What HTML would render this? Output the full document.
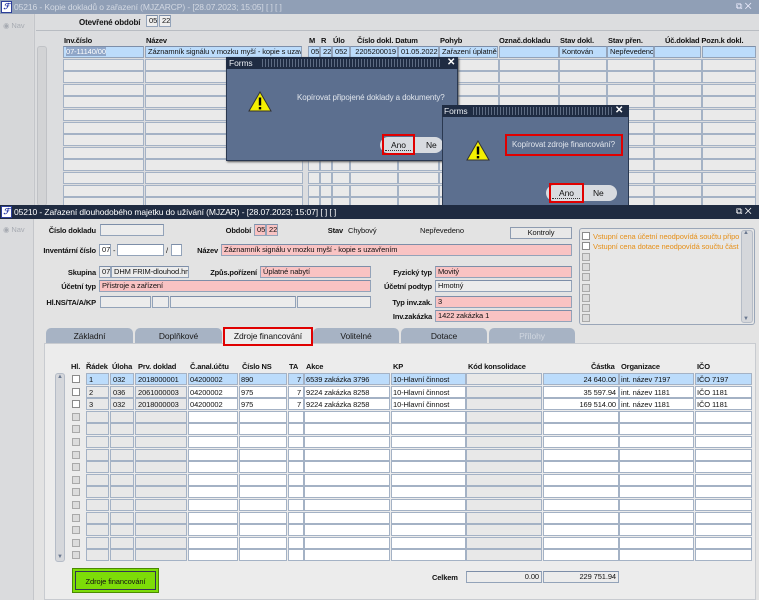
<!DOCTYPE html>
<html><head><meta charset="utf-8">
<style>
*{box-sizing:border-box;margin:0;padding:0}
body{width:759px;height:600px;overflow:hidden;position:relative;background:#d8d9db;font-family:"Liberation Sans",Arial,sans-serif;font-size:7.5px;color:#111;letter-spacing:-0.1px}
.a{position:absolute}
.lb{position:absolute;font-weight:bold;font-size:7.5px;white-space:nowrap;letter-spacing:-0.15px}
.lr{position:absolute;font-weight:bold;font-size:7.5px;white-space:nowrap;text-align:right;width:100px;letter-spacing:-0.15px}
.f{position:absolute;height:12px;border:1px solid #93a3b9;border-top-color:#7d8ea8;background:#ececec;font-size:7.5px;line-height:10px;padding-left:2px;white-space:nowrap;overflow:hidden}
.pk{background:#f9c3c3}
.wh{background:#fff}
.bl{background:#bcdcfb}
.t{position:absolute;white-space:nowrap}
.tc{position:absolute;height:12px;border:1px solid #a4b2c5;background:#eaeaea}
.cb{position:absolute;width:8px;height:8px;border:1px solid #8a8a8a;background:#fff}
.cbg{background:#dcdcdc;border-color:#a9a9a9}
.tab{position:absolute;top:328px;height:16px;background:#a7b3c4;border-radius:5px 5px 0 0;text-align:center;font-size:8.5px;line-height:16px;color:#1a1a1a}
</style></head><body>

<!-- TOP WINDOW (inactive) -->
<div class="a" style="left:0;top:0;width:759px;height:14px;background:#909fb6"></div>
<div class="a" style="left:1px;top:1px;width:11px;height:12px;background:#fff;border:1px solid #2d3f9a;color:#1d2fa3;font:bold italic 8px/10px 'Liberation Serif',serif;text-align:center">ℱ</div>
<div class="t" style="left:14px;top:2px;font-size:8.5px;color:#d3d9e3">05216 - Kopie dokladů o zařazení (MJZARCP) - [28.07.2023; 15:05] [ ] [ ]</div>
<div class="t" style="left:736px;top:1px;font-size:9px;color:#eef">⧉ ✕</div>
<div class="a" style="left:0;top:14px;width:33px;height:192px;background:#d6d7d9"></div>
<div class="t" style="left:3px;top:21px;color:#a7abb2">◉ Nav</div>
<div class="a" style="left:34px;top:14px;width:725px;height:192px;background:#dcdddf;border-left:1px solid #c4c6ca"></div>
<div class="a" style="left:36px;top:30px;width:723px;height:1px;background:#b8bcc2"></div>
<div class="lb" style="left:79px;top:18px;font-size:8px">Otevřené období</div>
<div class="f" style="left:146px;top:15px;width:12px;background:#eee">05</div>
<div class="f" style="left:159px;top:15px;width:12px;background:#eee">22</div>
<div class="lb" style="left:64px;top:36px">Inv.číslo</div>
<div class="lb" style="left:146px;top:36px">Název</div>
<div class="lb" style="left:309px;top:36px">M</div>
<div class="lb" style="left:321px;top:36px">R</div>
<div class="lb" style="left:333px;top:36px">Úlo</div>
<div class="lb" style="left:357px;top:36px">Číslo dokl. Datum</div>
<div class="lb" style="left:440px;top:36px">Pohyb</div>
<div class="lb" style="left:499px;top:36px">Označ.dokladu</div>
<div class="lb" style="left:560px;top:36px">Stav dokl.</div>
<div class="lb" style="left:608px;top:36px">Stav přen.</div>
<div class="lb" style="left:665px;top:36px">Úč.doklad Pozn.k dokl.</div>
<div class="a" style="left:37px;top:46px;width:10px;height:160px;background:#d2d3d5;border:1px solid #c0c2c6;border-radius:3px"></div>
<div id="topgrid"></div>
<div class="f bl" style="left:63px;top:46px;width:81px"><span style="background:#8fa6c8;color:#fff">07-11140/00</span></div>
<div class="f bl" style="left:145px;top:46px;width:157px">Záznamník signálu v mozku myší - kopie s uzavř</div>
<div class="f bl" style="left:308px;top:46px;width:12px">05</div>
<div class="f bl" style="left:320px;top:46px;width:12px">22</div>
<div class="f bl" style="left:332px;top:46px;width:18px">052</div>
<div class="f bl" style="left:350px;top:46px;width:48px;text-align:right;padding-right:1px">2205200019</div>
<div class="f bl" style="left:398px;top:46px;width:41px">01.05.2022</div>
<div class="f bl" style="left:439px;top:46px;width:59px">Zařazení úplatně</div>
<div class="f bl" style="left:499px;top:46px;width:60px"></div>
<div class="f bl" style="left:559px;top:46px;width:48px">Kontován</div>
<div class="f bl" style="left:607px;top:46px;width:47px">Nepřevedeno</div>
<div class="f bl" style="left:654px;top:46px;width:47px"></div>
<div class="f bl" style="left:702px;top:46px;width:54px"></div>

<!-- DIALOG 1 -->
<div class="a" style="left:226px;top:57px;width:232px;height:104px;background:#5c6f8f;border:1px solid #2a3850;box-shadow:1px 1px 2px #555"></div>
<div class="a" style="left:226px;top:57px;width:232px;height:12px;background:#1f2c43"></div>
<div class="a" style="left:262px;top:59px;width:180px;height:8px;background:repeating-linear-gradient(90deg,#5d6b82 0 1px,transparent 1px 3px)"></div>
<div class="t" style="left:229px;top:58px;font-size:8.5px;color:#e8ecf2">Forms</div>
<div class="t" style="left:447px;top:57px;font-size:10px;color:#fff;font-weight:bold">✕</div>
<svg class="a" style="left:248px;top:91px" width="24" height="21" viewBox="0 0 24 21"><path d="M12 1 L23 20 L1 20 Z" fill="#f4f000" stroke="#333" stroke-width="1"/><rect x="10.8" y="6.5" width="2.4" height="8" fill="#000"/><rect x="10.8" y="16" width="2.4" height="2.4" fill="#000"/></svg>
<div class="t" style="left:297px;top:93px;font-size:8px;color:#e0e5ec">Kopírovat připojené doklady a dokumenty?</div>
<div class="a" style="left:380px;top:137px;width:63px;height:16px;background:#d8dbe0;border-radius:8px"></div>
<div class="a" style="left:385px;top:139px;width:26px;height:12px;border-bottom:1px dotted #333"></div>
<div class="t" style="left:391px;top:140px;font-size:8.5px">Ano</div>
<div class="t" style="left:426px;top:140px;font-size:8.5px">Ne</div>
<div class="a" style="left:382px;top:134px;width:33px;height:21px;border:2px solid #e00000"></div>

<!-- DIALOG 2 -->
<div class="a" style="left:442px;top:105px;width:187px;height:101px;background:#5c6f8f;border:1px solid #2a3850"></div>
<div class="a" style="left:442px;top:105px;width:187px;height:12px;background:#1f2c43"></div>
<div class="a" style="left:473px;top:107px;width:140px;height:8px;background:repeating-linear-gradient(90deg,#5d6b82 0 1px,transparent 1px 3px)"></div>
<div class="t" style="left:444px;top:106px;font-size:8.5px;color:#e8ecf2">Forms</div>
<div class="t" style="left:615px;top:105px;font-size:10px;color:#fff;font-weight:bold">✕</div>
<svg class="a" style="left:466px;top:140px" width="24" height="21" viewBox="0 0 24 21"><path d="M12 1 L23 20 L1 20 Z" fill="#f4f000" stroke="#333" stroke-width="1"/><rect x="10.8" y="6.5" width="2.4" height="8" fill="#000"/><rect x="10.8" y="16" width="2.4" height="2.4" fill="#000"/></svg>
<div class="t" style="left:512px;top:140px;font-size:8px;color:#e0e5ec">Kopírovat zdroje financování?</div>
<div class="a" style="left:505px;top:134px;width:118px;height:22px;border:2px solid #e00000"></div>
<div class="a" style="left:546px;top:185px;width:71px;height:16px;background:#d8dbe0;border-radius:8px"></div>
<div class="a" style="left:552px;top:187px;width:28px;height:12px;border-bottom:1px dotted #333"></div>
<div class="t" style="left:559px;top:188px;font-size:8.5px">Ano</div>
<div class="t" style="left:593px;top:188px;font-size:8.5px">Ne</div>
<div class="a" style="left:549px;top:183px;width:35px;height:20px;border:2px solid #e00000"></div>

<!-- BOTTOM WINDOW -->
<div class="a" style="left:0;top:205px;width:759px;height:14px;background:#1f2b41"></div>
<div class="a" style="left:1px;top:206px;width:11px;height:12px;background:#fff;border:1px solid #2d3f9a;color:#1d2fa3;font:bold italic 8px/10px 'Liberation Serif',serif;text-align:center">ℱ</div>
<div class="t" style="left:14px;top:207px;font-size:8.5px;color:#fff">05210 - Zařazení dlouhodobého majetku do užívání (MJZAR) - [28.07.2023; 15:07] [ ] [ ]</div>
<div class="t" style="left:736px;top:206px;font-size:9px;color:#fff">⧉ ✕</div>
<div class="a" style="left:0;top:219px;width:33px;height:381px;background:#dadbdd"></div>
<div class="t" style="left:3px;top:225px;color:#a7abb2">◉ Nav</div>
<div class="a" style="left:33px;top:219px;width:726px;height:381px;background:#e3e3e3;border-left:1px solid #c4c6ca"></div>

<div class="lr" style="left:-4px;top:226px">Číslo dokladu</div>
<div class="f" style="left:100px;top:224px;width:64px"></div>
<div class="lr" style="left:151px;top:226px">Období</div>
<div class="f pk" style="left:254px;top:224px;width:12px">05</div>
<div class="f pk" style="left:266px;top:224px;width:12px">22</div>
<div class="lr" style="left:243px;top:226px">Stav</div>
<div class="t" style="left:348px;top:226px">Chybový</div>
<div class="t" style="left:420px;top:226px">Nepřevedeno</div>
<div class="a" style="left:510px;top:227px;width:62px;height:12px;background:#e8e8e8;border:1px solid #8d9bb0;text-align:center;line-height:10px">Kontroly</div>

<div class="lr" style="left:-4px;top:246px">Inventární číslo</div>
<div class="f wh" style="left:99px;top:244px;width:12px">07</div>
<div class="t" style="left:113px;top:246px">-</div>
<div class="f wh" style="left:117px;top:244px;width:47px"></div>
<div class="t" style="left:166px;top:246px">/</div>
<div class="f wh" style="left:171px;top:244px;width:11px"></div>
<div class="lr" style="left:118px;top:246px">Název</div>
<div class="f pk" style="left:221px;top:244px;width:351px">Záznamník signálu v mozku myší - kopie s uzavřením</div>

<div class="lr" style="left:-4px;top:268px">Skupina</div>
<div class="f" style="left:99px;top:266px;width:12px">07</div>
<div class="f" style="left:111px;top:266px;width:78px">DHM FRIM-dlouhod.hmo</div>
<div class="lr" style="left:157px;top:268px">Způs.pořízení</div>
<div class="f pk" style="left:260px;top:266px;width:111px">Úplatné nabytí</div>
<div class="lr" style="left:-4px;top:282px">Účetní typ</div>
<div class="f pk" style="left:99px;top:280px;width:272px">Přístroje a zařízení</div>
<div class="lr" style="left:332px;top:268px">Fyzický typ</div>
<div class="f pk" style="left:435px;top:266px;width:137px">Movitý</div>
<div class="lr" style="left:332px;top:282px">Účetní podtyp</div>
<div class="f" style="left:435px;top:280px;width:137px">Hmotný</div>
<div class="lr" style="left:-4px;top:298px">Hl.NS/TA/A/KP</div>
<div class="f" style="left:100px;top:296px;width:51px"></div>
<div class="f" style="left:152px;top:296px;width:17px"></div>
<div class="f" style="left:170px;top:296px;width:126px"></div>
<div class="f" style="left:297px;top:296px;width:74px"></div>
<div class="lr" style="left:332px;top:298px">Typ inv.zak.</div>
<div class="f pk" style="left:435px;top:296px;width:137px">3</div>
<div class="lr" style="left:332px;top:312px">Inv.zakázka</div>
<div class="f pk" style="left:435px;top:310px;width:137px">1422 zakázka 1</div>

<div class="a" style="left:579px;top:228px;width:176px;height:97px;border:1px solid #9aa6b8;border-radius:3px;background:#e7e7e7"></div>
<div class="a" style="left:741px;top:230px;width:12px;height:93px;background:#d5d7db;border:1px solid #b5bcc7;border-radius:3px"></div>
<div class="t" style="left:743px;top:230px;font-size:6px;color:#6a7890">▲</div>
<div class="t" style="left:743px;top:316px;font-size:6px;color:#6a7890">▼</div>
<div id="chk"></div>
<div class="t" style="left:593px;top:232px;color:#e6901a;width:146px;overflow:hidden">Vstupní cena účetní neodpovídá součtu připo</div>
<div class="t" style="left:593px;top:242px;color:#e6901a;width:146px;overflow:hidden">Vstupní cena dotace neodpovídá součtu část</div>

<!-- tabs -->
<div class="tab" style="left:46px;width:87px">Základní</div>
<div class="tab" style="left:135px;width:87px">Doplňkové</div>
<div class="tab" style="left:313px;width:86px">Volitelné</div>
<div class="tab" style="left:401px;width:86px">Dotace</div>
<div class="tab" style="left:489px;width:86px;color:#d0d6df">Přílohy</div>
<div class="a" style="left:44px;top:343px;width:712px;height:257px;background:#ececec;border:1px solid #c8cbd0"></div>
<div class="tab" style="left:224px;width:88px;height:18px;background:#ececec"></div>
<div class="t" style="left:224px;top:331px;width:88px;text-align:center;font-size:8.5px">Zdroje financování</div>
<div class="a" style="left:223px;top:327px;width:90px;height:19px;border:2px solid #e00000"></div>

<div class="lb" style="left:71px;top:362px">Hl.</div>
<div class="lb" style="left:86px;top:362px">Řádek</div>
<div class="lb" style="left:112px;top:362px">Úloha</div>
<div class="lb" style="left:138px;top:362px">Prv. doklad</div>
<div class="lb" style="left:190px;top:362px">Č.anal.účtu</div>
<div class="lb" style="left:242px;top:362px">Číslo NS</div>
<div class="lb" style="left:289px;top:362px">TA</div>
<div class="lb" style="left:306px;top:362px">Akce</div>
<div class="lb" style="left:393px;top:362px">KP</div>
<div class="lb" style="left:468px;top:362px">Kód konsolidace</div>
<div class="lb" style="left:591px;top:362px">Částka</div>
<div class="lb" style="left:621px;top:362px">Organizace</div>
<div class="lb" style="left:697px;top:362px">IČO</div>
<div class="a" style="left:55px;top:373px;width:10px;height:189px;background:#d5d7db;border:1px solid #b5bcc7;border-radius:3px"></div>
<div class="t" style="left:57px;top:374px;font-size:6px;color:#6a7890">▲</div>
<div class="t" style="left:57px;top:554px;font-size:6px;color:#6a7890">▼</div>
<div id="bgrid"></div>

<div class="a" style="left:72px;top:568px;width:87px;height:25px;background:#7ddc08;border:1px solid #4a8a00;box-shadow:inset 0 0 0 2px #7ddc08,inset 0 0 0 3px #335;"></div>
<div class="t" style="left:72px;top:577px;width:87px;text-align:center">Zdroje financování</div>
<div class="lb" style="left:432px;top:573px">Celkem</div>
<div class="f" style="left:466px;top:571px;width:76px;text-align:right;padding-right:2px">0.00</div>
<div class="f" style="left:543px;top:571px;width:76px;text-align:right;padding-right:2px">229 751.94</div>

<script>
function h(id,s){document.getElementById(id).innerHTML=s;}
var tc=[[63,81],[145,158],[308,12],[320,12],[332,18],[350,48],[398,41],[439,60],[499,60],[559,48],[607,47],[654,48],[702,54]];
var s='';
for(var r=1;r<13;r++){var y=46+r*12.6;for(var c=0;c<tc.length;c++){s+='<div class="tc" style="left:'+tc[c][0]+'px;top:'+y+'px;width:'+tc[c][1]+'px"></div>';}}
h('topgrid',s);
s='';for(var i=0;i<9;i++){s+='<div class="cb'+(i>1?' cbg':'')+'" style="left:582px;top:'+(232+i*10.3)+'px"></div>';}h('chk',s);
var bc=[[86,23,0],[110,24,0],[135,52,0],[188,50,1],[239,48,1],[288,16,1],[304,86,1],[391,75,1],[466,76,0],[543,76,1],[619,75,1],[695,57,1]];
s='';
for(var r=0;r<15;r++){var y=373+r*12.6;
 s+='<div class="cb'+(r>2?' cbg':'')+'" style="left:72px;top:'+(y+2)+'px"></div>';
 for(var c=0;c<bc.length;c++){var bg=r==0&&c!=8?'#bcdcfb':(bc[c][2]?'#fff':'#e8e8e8');
 s+='<div class="tc" style="left:'+bc[c][0]+'px;top:'+y+'px;width:'+bc[c][1]+'px;background:'+bg+'"></div>';}}
h('bgrid',s);
</script>
<div class="t" style="left:89px;top:375px">1</div><div class="t" style="left:113px;top:375px">032</div><div class="t" style="left:138px;top:375px">2018000001</div><div class="t" style="left:190px;top:375px">04200002</div><div class="t" style="left:241px;top:375px">890</div><div class="t" style="left:297px;top:375px">7</div><div class="t" style="left:306px;top:375px">6539 zakázka 3796</div><div class="t" style="left:393px;top:375px">10-Hlavní činnost</div><div class="t" style="left:545px;top:375px;width:71px;text-align:right">24 640.00</div><div class="t" style="left:621px;top:375px">int. název 7197</div><div class="t" style="left:697px;top:375px">IČO 7197</div>
<div class="t" style="left:89px;top:388px">2</div><div class="t" style="left:113px;top:388px">036</div><div class="t" style="left:138px;top:388px">2061000003</div><div class="t" style="left:190px;top:388px">04200002</div><div class="t" style="left:241px;top:388px">975</div><div class="t" style="left:297px;top:388px">7</div><div class="t" style="left:306px;top:388px">9224 zakázka 8258</div><div class="t" style="left:393px;top:388px">10-Hlavní činnost</div><div class="t" style="left:545px;top:388px;width:71px;text-align:right">35 597.94</div><div class="t" style="left:621px;top:388px">int. název 1181</div><div class="t" style="left:697px;top:388px">IČO 1181</div>
<div class="t" style="left:89px;top:400px">3</div><div class="t" style="left:113px;top:400px">032</div><div class="t" style="left:138px;top:400px">2018000003</div><div class="t" style="left:190px;top:400px">04200002</div><div class="t" style="left:241px;top:400px">975</div><div class="t" style="left:297px;top:400px">7</div><div class="t" style="left:306px;top:400px">9224 zakázka 8258</div><div class="t" style="left:393px;top:400px">10-Hlavní činnost</div><div class="t" style="left:545px;top:400px;width:71px;text-align:right">169 514.00</div><div class="t" style="left:621px;top:400px">int. název 1181</div><div class="t" style="left:697px;top:400px">IČO 1181</div>
</body></html>
